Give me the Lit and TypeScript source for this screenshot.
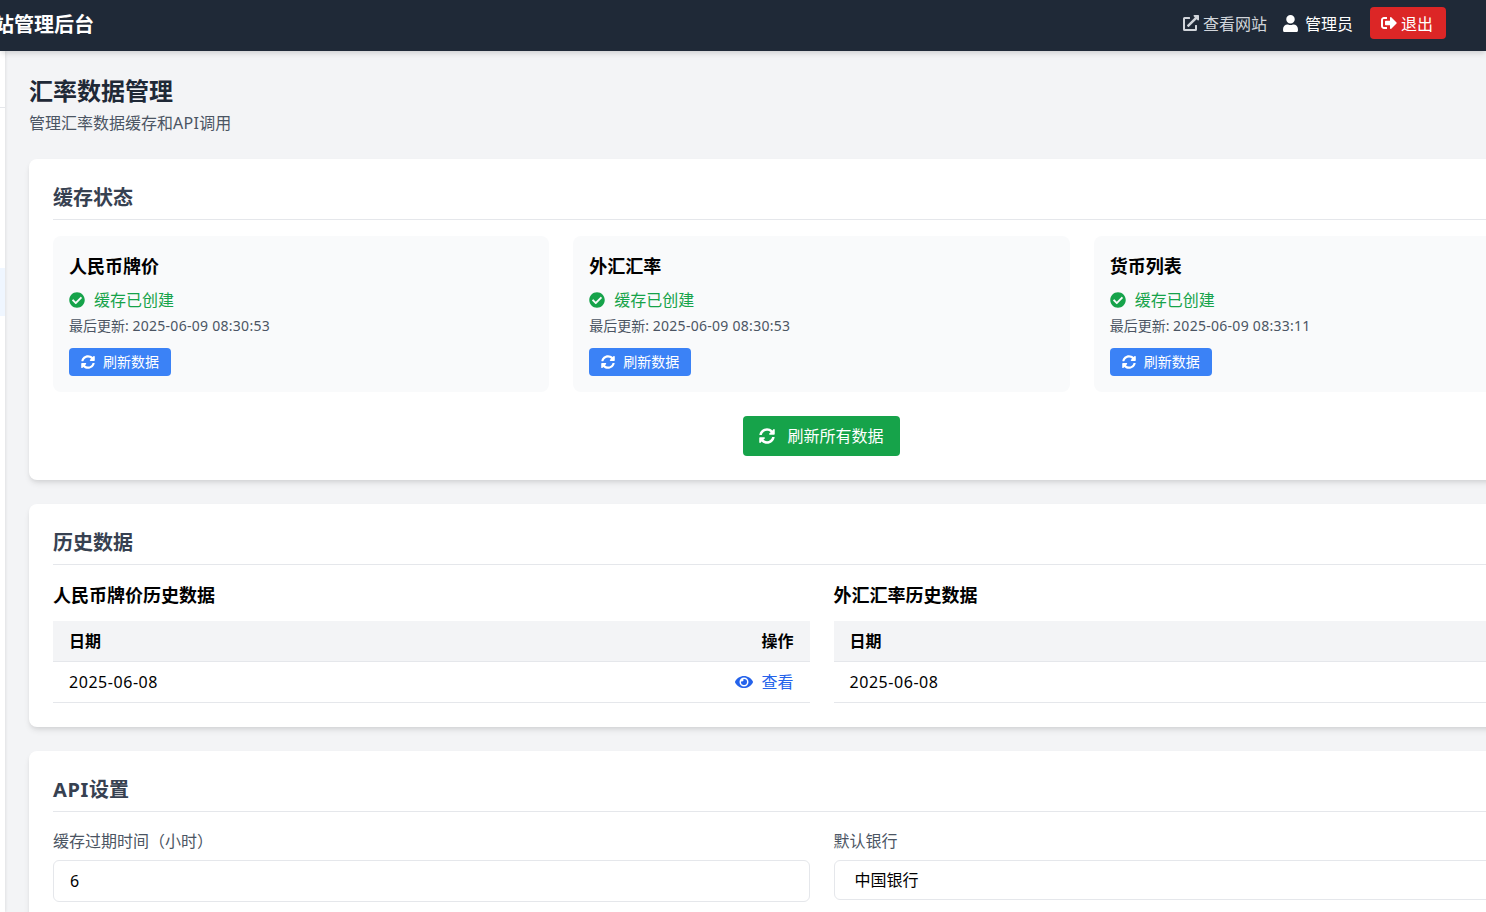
import { LitElement, html, css, svg } from "lit";
import { customElement } from "lit/decorators.js";

const P: Record<string, [number, string]> = {
  sync: [512, "M370.72 133.28C339.458 104.008 298.888 87.962 255.848 88c-77.458.068-144.328 53.178-162.791 126.85-1.344 5.363-6.122 9.15-11.651 9.15H24.103c-7.498 0-13.194-6.807-11.807-14.176C33.933 94.924 134.813 8 256 8c66.448 0 126.791 26.136 171.315 68.685L463.03 40.97C478.149 25.851 504 36.559 504 57.941V192c0 13.255-10.745 24-24 24H345.941c-21.382 0-32.09-25.851-16.971-40.971l41.75-41.749zM32 296h134.059c21.382 0 32.09 25.851 16.971 40.971l-41.75 41.75c31.262 29.273 71.835 45.319 114.876 45.28 77.418-.07 144.315-53.144 162.787-126.849 1.344-5.363 6.122-9.15 11.651-9.15h57.304c7.498 0 13.194 6.807 11.807 14.176C478.067 417.076 377.187 504 256 504c-66.448 0-126.791-26.136-171.315-68.685L48.97 471.03C33.851 486.149 8 475.441 8 454.059V320c0-13.255 10.745-24 24-24z"],
  check: [512, "M504 256c0 136.967-111.033 248-248 248S8 392.967 8 256 119.033 8 256 8s248 111.033 248 248zM227.314 387.314l184-184c6.248-6.248 6.248-16.379 0-22.627l-22.627-22.627c-6.248-6.249-16.379-6.249-22.628 0L216 308.118l-70.059-70.059c-6.248-6.248-16.379-6.248-22.628 0l-22.627 22.627c-6.248 6.248-6.248 16.379 0 22.627l104 104c6.249 6.249 16.379 6.249 22.628.001z"],
  eye: [576, "M572.52 241.4C518.29 135.59 410.93 64 288 64S57.68 135.64 3.48 241.41a32.35 32.35 0 0 0 0 29.19C57.71 376.41 165.07 448 288 448s230.32-71.64 284.52-177.41a32.35 32.35 0 0 0 0-29.19zM288 400a144 144 0 1 1 144-144 143.93 143.93 0 0 1-144 144zm0-240a95.31 95.31 0 0 0-25.31 3.79 47.85 47.85 0 0 1-66.9 66.9A95.78 95.78 0 1 0 288 160z"],
  user: [448, "M224 256c70.7 0 128-57.3 128-128S294.7 0 224 0 96 57.3 96 128s57.3 128 128 128zm89.6 32h-16.7c-22.2 10.2-46.9 16-72.9 16s-50.6-5.8-72.9-16h-16.7C60.2 288 0 348.2 0 422.4V464c0 26.5 21.5 48 48 48h352c26.5 0 48-21.5 48-48v-41.6c0-74.2-60.2-134.4-134.4-134.4z"],
  ext: [512, "M432,320H400a16,16,0,0,0-16,16V448H64V128H208a16,16,0,0,0,16-16V80a16,16,0,0,0-16-16H48A48,48,0,0,0,0,112V464a48,48,0,0,0,48,48H400a48,48,0,0,0,48-48V336A16,16,0,0,0,432,320ZM488,0h-128c-21.37,0-32.05,25.91-17,41l35.73,35.73L135,320.37a24,24,0,0,0,0,34L157.67,377a24,24,0,0,0,34,0L435.28,133.32,471,169c15,15,41,4.5,41-17V24A24,24,0,0,0,488,0Z"],
  out: [512, "M497 273L329 441c-15 15-41 4.5-41-17v-96H152c-13.3 0-24-10.7-24-24v-96c0-13.3 10.7-24 24-24h136V88c0-21.4 25.9-32 41-17l168 168c9.3 9.4 9.3 24.6 0 34zM192 436v-40c0-6.6-5.4-12-12-12H96c-17.7 0-32-14.3-32-32V160c0-17.7 14.3-32 32-32h84c6.6 0 12-5.4 12-12V76c0-6.6-5.4-12-12-12H96c-53 0-96 43-96 96v192c0 53 43 96 96 96h84c6.6 0 12-5.4 12-12z"],
};
const icon = (n: string, cls: string) =>
  html`<svg class=${cls} viewBox="0 0 ${P[n][0]} 512" fill="currentColor">${svg`<path d=${P[n][1]}></path>`}</svg>`;

const stats = [
  ["人民币牌价", "2025-06-09 08:30:53"],
  ["外汇汇率", "2025-06-09 08:30:53"],
  ["货币列表", "2025-06-09 08:33:11"],
];

@customElement("app-root")
export class AppRoot extends LitElement {
  static styles = css`
    :host {
      display: block;
      width: 1486px;
      height: 912px;
      overflow: hidden;
      background: #f3f4f6;
      font-family: "Noto Sans", "Noto Sans CJK SC", sans-serif;
      font-size: 16px;
      line-height: 24px;
      color: #000;
    }
    * { box-sizing: border-box; }
    .topbar {
      position: relative;
      z-index: 2;
      height: 51px;
      background: #1f2937;
      color: #fff;
      display: flex;
      align-items: center;
      justify-content: space-between;
      padding: 0 40px 5px 0;
      box-shadow: 0 4px 6px -1px rgba(0,0,0,.1), 0 2px 4px -1px rgba(0,0,0,.06);
    }
    .brand { font-size: 20px; font-weight: 700; margin-left: -26px; padding-top: 4px; white-space: nowrap; }
    .tools { display: flex; align-items: center; }
    .tools span { padding-top: 2px; }
    .site { display: flex; align-items: center; color: #d1d5db; gap: 4px; margin-right: 16px; }
    .who { display: flex; align-items: center; gap: 7px; margin-right: 17px; }
    .logout {
      display: flex; align-items: center; gap: 4px;
      height: 32px; width: 76px; padding-left: 11px;
      background: #dc2626; border-radius: 4px; color: #fff;
    }
    .i16 { width: 16px; height: 16px; flex: none; display: block; }
    .i14 { width: 14px; height: 14px; flex: none; display: block; }
    .iu { width: 15px; height: 17px; flex: none; display: block; }
    .ie { width: 18px; height: 16px; flex: none; display: block; }
    .body { display: flex; height: 861px; }
    .side {
      width: 5px; flex: none; background: #fff; overflow: hidden;
      box-shadow: 1px 0 3px rgba(0,0,0,.08);
      position: relative; z-index: 1;
    }
    .side-head { height: 57px; border-bottom: 1px solid #e5e7eb; }
    .side-item { height: 48px; margin-top: 160px; background: #eff6ff; }
    .main { flex: none; width: 1633px; padding: 24px; }
    h1 { margin: 0; font-size: 24px; line-height: 32px; font-weight: 700; color: #1f2937; }
    .lead { margin: 4px 0 24px; color: #4b5563; }
    .lead-api { letter-spacing: .3px; }
    .card {
      background: #fff; border-radius: 8px; padding: 24px; margin-bottom: 24px;
      box-shadow: 0 4px 6px -1px rgba(0,0,0,.1), 0 2px 4px -1px rgba(0,0,0,.06);
    }
    h2 {
      margin: 0 0 16px; padding: 1px 0 7px; font-size: 20px; line-height: 28px; font-weight: 700;
      color: #374151; border-bottom: 1px solid #e5e7eb;
    }
    .latin-h { letter-spacing: .67px; }
    .g3 { display: grid; grid-template-columns: repeat(3, 1fr); gap: 24px; }
    .g2 { display: grid; grid-template-columns: repeat(2, 1fr); gap: 24px; }
    .stat { background: #f9fafb; border-radius: 8px; padding: 16px; }
    h3 { margin: 0; font-size: 18px; line-height: 28px; font-weight: 700; }
    .ok { display: flex; align-items: center; gap: 9px; margin-top: 8px; color: #16a34a; }
    .upd { font-size: 14px; line-height: 20px; color: #4b5563; margin-top: 4px; }
    .num14 { letter-spacing: .28px; }
    .num16 { letter-spacing: .55px; }
    .btn { display: inline-flex; align-items: center; color: #fff; border-radius: 4px; }
    .sm { height: 28px; padding: 0 12px; gap: 8px; background: #3b82f6; font-size: 14px; margin-top: 12px; vertical-align: top; }
    .all-row { display: flex; justify-content: center; margin-top: 24px; }
    .all { height: 40px; padding: 0 16px; gap: 12px; background: #16a34a; }
    .tbl-title { margin-bottom: 12px; }
    table { width: 100%; border-collapse: collapse; }
    th, td { padding: 8px 16px; height: 40px; border-bottom: 1px solid #e5e7eb; text-align: left; font-weight: 400; }
    th { background: #f3f4f6; font-weight: 700; }
    .r { text-align: right; }
    .link { display: inline-flex; align-items: center; gap: 8px; color: #2563eb; vertical-align: top; }
    label { display: block; color: #4b5563; padding-top: 1px; margin-bottom: 7px; }
    input, select {
      display: block; width: 100%; font: inherit; color: #000; background: #fff;
      border: 1px solid #e5e7eb; border-radius: 6px; outline: none;
    }
    input { height: 42px; padding: 0 16px; }
    select { height: 40px; padding: 0 16px; }
  `;

  render() {
    return html`
      <header class="topbar">
        <div class="brand">网站管理后台</div>
        <div class="tools">
          <div class="site">${icon("ext", "i16")}<span>查看网站</span></div>
          <div class="who">${icon("user", "iu")}<span>管理员</span></div>
          <div class="logout">${icon("out", "i16")}<span>退出</span></div>
        </div>
      </header>
      <div class="body">
        <aside class="side"><div class="side-head"></div><div class="side-item"></div></aside>
        <main class="main">
          <h1>汇率数据管理</h1>
          <p class="lead">管理汇率数据缓存和<span class="lead-api">API</span>调用</p>
          <section class="card">
            <h2>缓存状态</h2>
            <div class="g3">
              ${stats.map(([n, t]) => html`
                <div class="stat">
                  <h3>${n}</h3>
                  <div class="ok">${icon("check", "i16")}<span>缓存已创建</span></div>
                  <div class="upd">最后更新: <span class="num14">${t}</span></div>
                  <div class="btn sm">${icon("sync", "i14")}<span>刷新数据</span></div>
                </div>`)}
            </div>
            <div class="all-row"><div class="btn all">${icon("sync", "i16")}<span>刷新所有数据</span></div></div>
          </section>
          <section class="card">
            <h2>历史数据</h2>
            <div class="g2">
              ${["人民币牌价历史数据", "外汇汇率历史数据"].map((n) => html`
                <div>
                  <h3 class="tbl-title">${n}</h3>
                  <table>
                    <thead><tr><th>日期</th><th class="r">操作</th></tr></thead>
                    <tbody><tr><td><span class="num16">2025-06-08</span></td><td class="r"><span class="link">${icon("eye", "ie")}<span>查看</span></span></td></tr></tbody>
                  </table>
                </div>`)}
            </div>
          </section>
          <section class="card">
            <h2><span class="latin-h">API</span>设置</h2>
            <div class="g2">
              <div><label>缓存过期时间（小时）</label><input value="6" /></div>
              <div><label>默认银行</label><select><option>中国银行</option></select></div>
            </div>
          </section>
        </main>
      </div>
    `;
  }
}
